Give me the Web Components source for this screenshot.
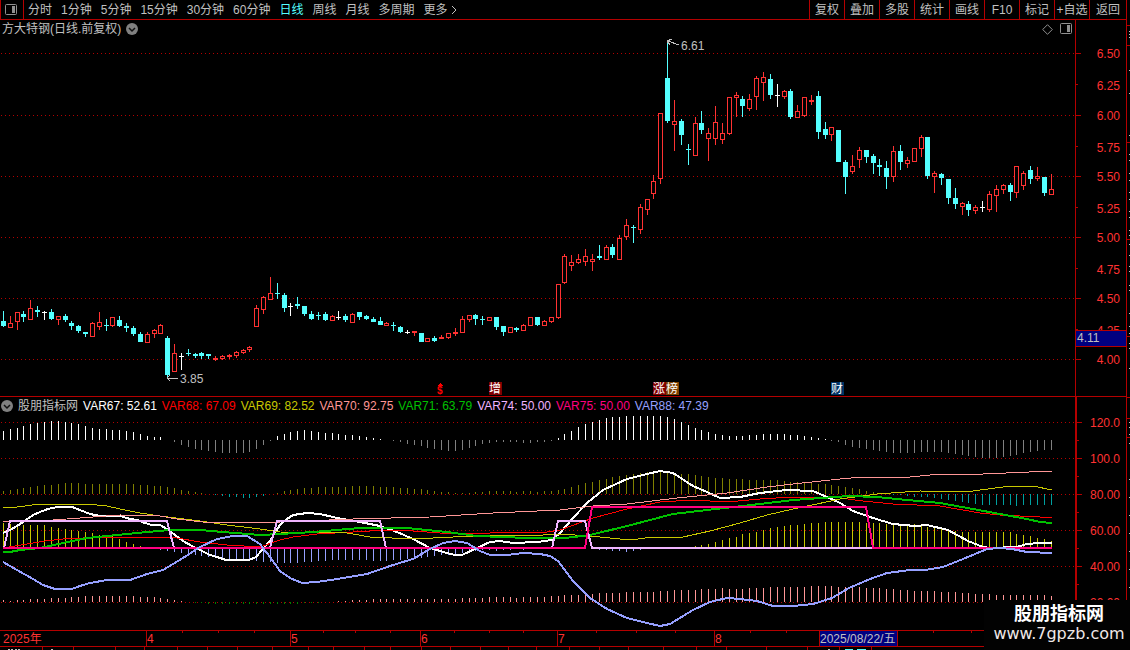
<!DOCTYPE html>
<html lang="zh-CN">
<head>
<meta charset="utf-8">
<meta name="viewport" content="width=device-width, initial-scale=1">
<title>方大特钢</title>
<style>
    :root {
        --line: #b40000;
        --label: #ff3232;
        --text: #c0c0c0;
        --active: #54ffff;
        --select: #000080;
    }

    body {
        margin: 0;
        background: #000;
        color: var(--text);
        font: 12px/18px "Liberation Sans", "Noto Sans CJK SC", sans-serif;
    }
</style>
</head>
<body>
<stock-terminal>
    <tool-bar slot="toolbar"></tool-bar>

    <chart-pane slot="charts">
        <pane-title slot="header" tools>方大特钢(日线.前复权)</pane-title>
        <price-chart slot="plot"></price-chart>
        <value-axis slot="axis" kind="price"></value-axis>
    </chart-pane>

    <chart-pane slot="charts" divided>
        <pane-title slot="header" icon-first>股朋指标网
            <legend-item slot="legend" name="VAR67" value="52.61" color="#ffffff"></legend-item>
            <legend-item slot="legend" name="VAR68" value="67.09" color="#ff0000"></legend-item>
            <legend-item slot="legend" name="VAR69" value="82.52" color="#c8c800"></legend-item>
            <legend-item slot="legend" name="VAR70" value="92.75" color="#ff9696"></legend-item>
            <legend-item slot="legend" name="VAR71" value="63.79" color="#00c000"></legend-item>
            <legend-item slot="legend" name="VAR74" value="50.00" color="#f0b4ff"></legend-item>
            <legend-item slot="legend" name="VAR75" value="50.00" color="#ff0080"></legend-item>
            <legend-item slot="legend" name="VAR88" value="47.39" color="#96a0ff"></legend-item>
        </pane-title>
        <indicator-chart slot="plot"></indicator-chart>
        <value-axis slot="axis" kind="indicator"></value-axis>
    </chart-pane>

    <time-axis slot="charts"></time-axis>
    <site-mark slot="mark">
        <span slot="name">股朋指标网</span>
        <span slot="address">www.7gpzb.com</span>
    </site-mark>
</stock-terminal>

<script>
// Screen rows at which the drawing areas begin
const PRICE_TOP = 38;
const INDICATOR_TOP = 415;

const RED = '#ff3232';
const CYAN = '#54ffff';

// Column of the n-th trading day
function dayX(n) {
    return Math.floor(3.38 + 6.848 * n);
}

function rect(x, y, w, h, fill) {
    return `<rect x="${x}" y="${y}" width="${w}" height="${h}" fill="${fill}"/>`;
}

function gridLines(rows) {
    return rows.map(y => `
        <line x1="1" x2="100%" y1="${y}" y2="${y}" transform="translate(0 .5)"
            stroke="#b40000" stroke-dasharray="1 3"/>`).join('');
}

// high, body top, body bottom, low, kind (r = up, c = down, w = flat)
const CANDLES = `
311 321 326 327 c|316 323 328 328 r|312 312 322 330 r|311 314 317 322 c|300 308 320 320 r|306 310 312 317 c
311 312 313 320 w|309 312 319 320 c|316 316 320 325 r|314 316 320 322 c|321 323 326 330 c|325 326 331 333 c
332 332 334 337 c|322 323 337 337 r|312 322 327 330 r|319 325 326 331 c|317 317 326 327 r|316 320 326 327 c
323 326 328 332 c|326 328 334 336 c|332 334 342 342 c|332 334 343 343 r|329 330 334 338 r|324 325 334 334 r
336 338 375 378 c|344 353 372 372 r|353 356 357 370 w|349 353 354 356 c|353 354 356 358 c|352 353 356 359 c
354 354 356 359 c|356 358 360 361 r|355 356 359 360 r|354 355 357 359 r|351 352 356 358 r|349 350 353 354 r
346 347 350 352 r|305 308 327 327 r|296 297 310 314 r|277 293 300 300 r|283 293 294 299 c|293 295 308 312 c
303 306 307 316 w|297 304 306 309 c|306 306 314 316 c|311 314 319 320 c|312 315 316 320 c|312 314 320 321 c
315 316 321 321 r|311 317 318 320 w|314 316 320 322 c|313 314 323 323 r|312 312 317 320 c|315 316 319 320 c
317 319 322 322 c|317 321 325 325 c|322 323 326 326 r|322 325 326 331 c|326 327 332 333 c|330 332 333 334 w
331 331 333 336 r|333 333 342 342 c|338 338 342 342 r|336 338 341 342 c|335 337 339 339 r|333 333 338 339 r
328 332 334 336 r|316 319 333 333 r|315 315 320 322 r|314 315 319 325 c|316 319 320 325 c|317 317 321 321 r
317 317 327 330 c|326 326 332 336 c|327 327 333 333 r|327 328 330 332 c|324 325 331 331 r|317 317 326 326 r
317 317 325 326 c|320 321 326 326 r|317 317 322 323 r|284 284 318 319 r|254 256 283 284 r|255 262 266 271 r
254 259 263 264 r|249 256 262 266 r|254 259 262 271 r|245 256 258 260 c|245 247 260 260 r|244 247 255 258 c
235 238 260 260 r|219 225 237 240 r|225 227 228 243 c|204 207 230 234 r|199 199 210 215 r|175 181 194 199 r
113 113 179 184 r|40 78 121 123 c|100 121 125 151 r|119 121 135 145 c|144 149 150 165 c|117 123 156 156 r
111 123 130 134 c|128 133 139 161 r|106 122 139 145 r|123 133 140 144 r|97 97 134 135 r|92 95 98 117 r
96 99 106 117 c|94 99 109 111 r|76 78 97 110 r|72 77 83 101 r|74 79 95 99 c|84 95 96 107 w
90 91 97 99 r|89 91 117 119 c|105 111 118 118 r|97 97 116 117 r|95 100 102 105 r|91 96 132 139 c
122 129 135 139 c|127 127 135 141 r|130 130 162 162 c|160 162 177 194 c|155 166 172 174 r|147 150 160 168 r
150 150 157 163 c|154 156 163 174 c|159 165 167 176 c|161 168 177 189 c|146 151 177 182 r|145 151 162 170 c
157 160 164 168 r|148 148 162 162 r|135 137 149 157 r|137 137 176 179 c|171 173 177 193 r|173 174 178 185 c
179 179 198 204 c|188 198 204 209 c|202 203 207 215 r|201 204 210 216 c|205 207 211 214 r|201 207 208 212 w
191 194 210 212 r|185 189 196 212 r|184 185 190 194 r|183 185 192 201 c|166 166 193 198 r|171 173 186 190 r
166 170 179 184 c|167 176 179 181 r|177 177 193 196 c|174 189 195 195 r`.trim().split(/[|\n]/);

// Bars of the indicator pane: base row, colours above and below it, heights
const HISTOGRAMS = [
    {
        base: 440, up: '#ffffff', down: '#808080',
        values: [9,11,12,14,16,17,18,19,19,18,17,16,14,12,11,11,10,10,9,8,6,4,3,3,0,-2,-5,-7,-9,-10,-11,-12,-13,-13,-13,-13,-12,-9,-5,-1,
            4,6,8,9,10,9,8,7,7,6,5,5,4,3,2,1,0,-1,-2,-4,-5,-6,-8,-9,-10,-11,-11,-10,-8,-6,-4,-3,-2,-2,-2,-2,-3,-3,-2,-2,-1,
            2,6,9,13,16,18,20,22,23,23,24,24,24,24,24,24,23,21,18,15,12,10,8,6,5,4,4,4,5,5,6,6,6,6,5,5,4,3,2,1,-1,-2,
            -5,-7,-8,-9,-10,-11,-12,-13,-13,-13,-13,-12,-12,-12,-12,-13,-14,-15,-16,-17,-18,-18,-18,-17,-16,-15,-13,-12,-11,-10,-10]
    },
    {
        base: 494, up: '#808000', down: '#00a0a0',
        values: [3,4,5,6,7,8,9,9,10,11,11,11,10,10,10,10,10,10,10,10,9,9,8,8,7,6,4,3,2,1,0,-1,-2,-3,-3,-4,-4,-3,-2,0,1,3,
            4,5,6,6,7,7,7,7,7,8,8,8,8,7,7,7,6,6,5,5,4,3,2,2,1,1,1,2,2,3,3,3,3,2,3,3,2,3,3,4,5,
            7,9,11,12,14,15,17,18,19,20,21,22,23,24,22,21,20,20,19,18,17,16,16,15,15,15,14,14,14,14,14,13,12,12,12,11,10,10,9,8,7,
            6,5,3,2,1,0,-1,-1,-2,-3,-3,-3,-4,-5,-6,-7,-8,-9,-10,-11,-11,-11,-11,-11,-12,-11,-11,-11,-11,-11]
    },
    {
        base: 547, gap: 2, up: '#c8c800', down: '#96a0ff',
        values: [24,23,22,22,22,22,22,20,19,18,17,16,15,14,12,12,11,8,5,3,1,0,0,-1,-2,-3,-4,-5,-6,-7,-8,-9,-10,-11,-11,-11,-11,-12,-13,-13,
            -14,-14,-14,-14,-13,-13,-12,-12,-11,-11,-11,-11,-11,-11,-12,-12,-12,-11,-11,-10,-10,-9,-8,-7,-6,-6,-5,-4,-3,-2,-1,-1,-2,-1,-1,0,-1,
            0,0,0,0,0,0,0,0,0,0,-1,-1,-2,-2,-3,-2,-1,0,0,0,0,0,0,0,1,2,3,5,7,9,10,13,14,15,17,19,20,21,22,22,23,24,24,
            25,25,25,25,25,25,24,24,24,23,23,23,23,23,22,20,19,19,18,16,15,15,15,15,15,15,15,15,13,12,11,9,8,6]
    },
    {
        base: 602, up: '#ff9696', down: '#008000',
        values: [2,1,2,2,3,3,3,4,4,4,5,5,6,6,6,6,6,6,6,6,5,5,5,4,3,2,1,0,-1,-1,-2,-2,-2,-2,-2,-2,-2,-2,-2,-2,-2,-2,-2,-2,-1,-1,-1,0,0,
            1,1,2,2,2,3,3,3,3,3,3,3,3,3,3,3,3,3,4,4,4,4,5,5,5,5,4,5,5,5,5,6,6,7,
            7,7,8,8,9,9,9,9,10,10,10,10,10,11,11,12,12,12,12,13,13,13,14,13,13,13,14,14,14,15,15,15,15,15,15,16,16,16,16,15,15,15,
            15,14,14,14,13,13,12,12,11,11,11,11,10,10,10,9,9,8,8,8,7,7,7,7,7,7,7,7,6]
    }
];

const CURVES = [
    // VAR67
    { color: '#ffffff', width: 2, points: `3,533 10,530 17,526 26,520 33,515 40,512 48,509 57,507 72,507 80,510 90,514 100,516 120,516 130,519 137,520
        145,523 152,525 160,525 167,529 175,535 183,541 192,546 200,550 210,555 217,557 226,560 249,560 256,557 262,550 270,541 276,531
        280,525 287,519 293,515 307,513 320,514 337,518 360,522 380,526 397,532 413,539 430,548 447,553 455,555 462,555 477,548 490,542
        500,541 513,543 537,542 552,540 560,533 573,518 587,503 603,490 627,479 647,474 660,471 673,473 693,486 707,492 720,498 740,497
        760,493 787,490 813,491 827,497 840,503 853,511 873,518 893,524 915,526 927,525 948,530 968,541 983,547 990,548 1017,547
        1027,544 1040,543 1052,543` },
    // VAR68
    { color: '#ff0000', width: 1, points: `3,548 27,544 45,541 63,539 83,538 110,537 167,537 177,538 200,542 227,545 260,547 280,540 293,537 317,534
        353,532 387,530 413,531 440,533 467,534 513,532 547,532 560,530 593,518 627,509 660,502 693,500 727,502 760,499 793,497 827,497
        840,498 863,501 893,504 940,506 980,513 1000,515 1040,517 1052,517` },
    // VAR69
    { color: '#c8c800', width: 1, points: `3,507 17,507 40,504 87,504 107,506 120,509 140,513 160,516 200,521 227,525 260,529 280,532 347,533 370,537
        413,539 453,537 497,535 527,536 560,534 590,536 630,540 653,537 683,537 710,531 740,523 767,515 793,509 817,504 840,499 877,494
        920,491 957,492 973,491 1003,487 1033,486 1052,490` },
    // VAR70
    { color: '#ff9696', width: 1, points: `3,522 40,521 80,518 120,515 160,516 177,519 203,522 280,522 353,519 430,517 493,513 560,510 593,506
        627,504 677,498 727,493 767,487 793,484 840,479 863,477 910,477 940,474 983,474 1052,471` },
    // VAR71
    { color: '#00c000', width: 2, points: `3,552 10,552 20,550 40,548 63,543 87,538 117,535 147,532 170,530 200,530 223,532 260,535 280,534 313,532
        360,528 407,528 447,532 477,536 527,538 565,538 590,535 627,526 673,514 707,510 760,504 793,500 849,496 877,497 907,500 940,503
        973,509 1000,514 1027,519 1040,522 1052,523` },
    // VAR74
    { color: '#f0b4ff', width: 2, points: '4,548 10,521 167,521 174,548 270,548 277,521 380,521 386,548 552,548 558,521 585,521 592,548 1052,548' },
    // VAR75
    { color: '#ff0080', width: 2, points: '3,548 585,548 592,507 866,507 873,548 1052,548' },
    // VAR88
    { color: '#96a0ff', width: 2, points: `3,562 17,570 33,579 43,585 55,589 72,589 80,586 90,583 107,580 130,580 147,574 163,570 183,558 200,547
        217,539 233,536 247,536 260,544 270,557 280,571 290,578 302,583 317,582 337,579 367,574 393,565 413,559 430,549 443,543 455,541
        467,543 480,551 490,555 507,555 523,553 540,554 550,556 558,561 573,581 590,598 607,609 627,618 647,623 660,626 670,624 693,610
        710,602 727,598 740,599 757,601 773,606 793,606 813,604 832,598 849,588 870,579 887,573 910,570 925,570 943,567 963,559 987,549
        1000,548 1012,549 1027,552 1052,553` }
];

const ICONS = {
    panel: `<svg width="12" height="12" viewBox="0 0 12 12" fill="none" stroke="#909090">
        <rect x=".5" y=".5" width="11" height="10" rx="1"/><path d="M7 2h3v7H7z" fill="#909090" stroke="none"/></svg>`,
    diamond: `<svg width="11" height="11" viewBox="0 0 11 11" fill="none" stroke="#909090"><path d="M5.5 .7l4.8 4.8-4.8 4.8L.7 5.5z"/></svg>`,
    fold: `<svg width="12" height="12" viewBox="0 0 12 12" fill="none"><circle cx="6" cy="6" r="6" fill="#808080"/>
        <path d="M3 5l3 3 3-3" stroke="#101010" stroke-width="1.5"/></svg>`,
    more: `<svg width="6" height="10" viewBox="0 0 6 10" fill="none" stroke="currentColor"><path d="M1 1l4 4-4 4"/></svg>`
};

const BUTTON_CSS = `
    button {
        margin: 0;
        padding: 0;
        border: 0;
        background: none;
        color: inherit;
        font: inherit;
        white-space: nowrap;
        cursor: pointer;
    }

    button svg {
        display: block;
    }
`;

class StockTerminal extends HTMLElement {
    connectedCallback() {
        this.attachShadow({ mode: 'open' });
        this.shadowRoot.innerHTML = `
            <style>
                :host {
                    display: flex;
                    position: relative;
                    overflow: hidden;
                }

                main {
                    flex: 1;
                    min-width: 0;
                    border-right: 1px solid var(--line);
                }

                .next {
                    flex: none;
                    display: block;
                }
            </style>
            <main>
                <slot name="toolbar"></slot>
                <slot name="charts"></slot>
            </main>
            <svg class="next" width="3" height="650" aria-hidden="true">
                ${[25, 45, 142, 239, 336, 397, 418, 437].map(y => rect(0, y, 3, 1, '#b40000')).join('')}
                ${[31, 34, 37, 70, 93, 135, 154, 160, 173, 180, 192, 199, 211, 217, 230, 235, 244, 255, 266, 271, 285, 290, 313, 326, 333,
                    343, 348, 368, 422, 427, 434, 443, 479, 497, 515, 533, 551, 569, 587].map(y => rect(2, y, 1, 1, '#c0c0c0')).join('')}
            </svg>
            <slot name="mark"></slot>
        `;
    }
}

class ToolBar extends HTMLElement {
    connectedCallback() {
        const periods = ['分时', '1分钟', '5分钟', '15分钟', '30分钟', '60分钟', '日线', '周线', '月线', '多周期'];
        const tools = ['复权', '叠加', '多股', '统计', '画线', 'F10', '标记', '+自选', '返回'];

        this.attachShadow({ mode: 'open' });
        this.shadowRoot.innerHTML = `
            <style>
                ${BUTTON_CSS}

                :host {
                    display: flex;
                    justify-content: space-between;
                    box-sizing: border-box;
                    height: 20px;
                    border-bottom: 1px solid var(--line);
                    line-height: 20px;
                }

                .periods, .tools {
                    display: flex;
                }

                .periods {
                    gap: 9px;
                }

                .layout {
                    width: 24px;
                    margin-right: -5px;
                    padding-left: 4px;
                    border: solid var(--line);
                    border-width: 0 1px;
                }

                .more {
                    display: flex;
                    align-items: center;
                    gap: 3px;
                }

                .tools button {
                    box-sizing: border-box;
                    width: 35px;
                    border-left: 1px solid var(--line);
                }

                .tools button:last-child {
                    width: 37px;
                }

                [aria-pressed="true"] {
                    color: var(--active);
                }
            </style>
            <div class="periods">
                <button class="layout" aria-label="布局">${ICONS.panel}</button>
                ${periods.map(name => `<button aria-pressed="${name === '日线'}">${name}</button>`).join('')}
                <button class="more">更多${ICONS.more}</button>
            </div>
            <div class="tools">
                ${tools.map(name => `<button>${name}</button>`).join('')}
            </div>
        `;

        this.shadowRoot.querySelectorAll('[aria-pressed]').forEach((button, i, all) => {
            button.addEventListener('click', () => {
                all.forEach(other => other.setAttribute('aria-pressed', other === button));
            });
        });
    }
}

class ChartPane extends HTMLElement {
    connectedCallback() {
        this.attachShadow({ mode: 'open' });
        this.shadowRoot.innerHTML = `
            <style>
                :host {
                    display: grid;
                    grid-template-columns: minmax(0, 1fr) 51px;
                }

                :host([divided]) {
                    border-top: 1px solid var(--line);
                }

                .axis {
                    display: grid;
                    box-sizing: border-box;
                    border-left: 1px solid var(--line);
                }

                :host([divided]) .axis {
                    border-left-width: 2px;
                }
            </style>
            <section>
                <slot name="header"></slot>
                <slot name="plot"></slot>
            </section>
            <div class="axis"><slot name="axis"></slot></div>
        `;
    }
}

class PaneTitle extends HTMLElement {
    connectedCallback() {
        const fold = `<button aria-label="菜单">${ICONS.fold}</button>`;
        const first = this.hasAttribute('icon-first');

        this.attachShadow({ mode: 'open' });
        this.shadowRoot.innerHTML = `
            <style>
                ${BUTTON_CSS}

                :host {
                    display: flex;
                    align-items: center;
                    gap: 5px;
                    height: 18px;
                    padding: 0 3px 0 2px;
                    white-space: nowrap;
                }

                :host([icon-first]) {
                    padding-left: 1px;
                }

                h2 {
                    margin: 0;
                    font: inherit;
                }

                .tools {
                    display: flex;
                    align-items: center;
                    gap: 7px;
                    margin-left: auto;
                }
            </style>
            ${first ? fold : ''}
            <h2><slot></slot></h2>
            ${first ? '' : fold}
            <slot name="legend"></slot>
            ${this.hasAttribute('tools') ? `
                <div class="tools">
                    <button aria-label="标记">${ICONS.diamond}</button>
                    <button aria-label="侧栏">${ICONS.panel}</button>
                </div>
            ` : ''}
        `;
    }
}

class LegendItem extends HTMLElement {
    connectedCallback() {
        this.attachShadow({ mode: 'open' });
        this.shadowRoot.innerHTML = `
            <style>
                :host {
                    display: block;
                    color: ${this.getAttribute('color')};
                }
            </style>
            ${this.getAttribute('name')}: ${this.getAttribute('value')}
        `;
    }
}

const PLOT_CSS = `
    :host {
        display: block;
    }

    svg {
        display: block;
        width: 100%;
        shape-rendering: crispEdges;
        font: inherit;
    }
`;

class PriceChart extends HTMLElement {
    connectedCallback() {
        this.attachShadow({ mode: 'open' });
        this.shadowRoot.innerHTML = `
            <style>${PLOT_CSS}</style>
            <svg height="358">
                <g transform="translate(0 ${-PRICE_TOP})">
                    ${gridLines([53, 115, 176, 237, 298, 359])}
                    ${CANDLES.map((row, n) => this.candle(row, dayX(n))).join('')}
                    <path d="M167 378h11M167 378l3-3M167 378l3 3M668 41l11 4M667 41l5-2M667 41l3 4" fill="none" stroke="#c0c0c0"/>
                    <text x="180" y="383" fill="#c0c0c0">3.85</text>
                    <text x="681" y="50" fill="#c0c0c0">6.61</text>
                    <path d="M440 383l3 3h-6z" fill="#ff0000"/>
                    <text x="437" y="394" fill="#ff0000" font-size="10" font-weight="700">$</text>
                    ${this.badge(489, '增', '#800000')}
                    ${this.badge(653, '涨', '#800000')}
                    ${this.badge(666, '榜', '#804000')}
                    ${this.badge(831, '财', '#003366')}
                </g>
            </svg>
        `;
    }

    candle(row, x) {
        const [high, top, bottom, low, kind] = row.split(' ').map((v, i) => i < 4 ? Number(v) : v);
        const color = { r: RED, c: CYAN, w: '#ffffff' }[kind];
        const wick = rect(x, high, 1, low - high, color);
        const body = rect(x - 2, top, 5, bottom - top, color);
        const hollow = kind === 'r' && bottom - top > 2;

        return wick + body + (hollow ? rect(x - 1, top + 1, 3, bottom - top - 2, '#000') : '');
    }

    badge(x, text, fill) {
        return `${rect(x, 382, 13, 13, fill)}<text x="${x}" y="393" fill="#ffffff">${text}</text>`;
    }
}

class IndicatorChart extends HTMLElement {
    connectedCallback() {
        this.attachShadow({ mode: 'open' });
        this.shadowRoot.innerHTML = `
            <style>${PLOT_CSS}</style>
            <svg height="215">
                <g transform="translate(0 ${-INDICATOR_TOP})">
                    ${gridLines([422, 458, 494, 530, 566, 602])}
                    ${HISTOGRAMS.map(this.bars).join('')}
                    ${CURVES.map(c => `
                        <polyline points="${c.points}" fill="none" stroke="${c.color}" stroke-width="${c.width}"/>
                    `).join('')}
                </g>
            </svg>
        `;
    }

    bars({ base, gap = 0, up, down, values }) {
        return values.map((v, n) => v > 0
            ? rect(dayX(n), base - v, 1, v, up)
            : rect(dayX(n), base + gap, 1, -v, down)).join('');
    }
}

class ValueAxis extends HTMLElement {
    connectedCallback() {
        const price = this.getAttribute('kind') === 'price';
        const top = price ? 20 : 397;
        const right = price ? 44 : 43;
        // label text and its baseline
        const labels = price
            ? [['6.50', 58], ['6.25', 90], ['6.00', 120], ['5.75', 152], ['5.50', 181], ['5.25', 213], ['5.00', 242],
                ['4.75', 274], ['4.50', 303], ['4.25', 335], ['4.00', 364]]
            : [['120.0', 427], ['100.0', 463], ['80.00', 499], ['60.00', 535], ['40.00', 571], ['20.00', 607]];
        const major = price ? [53, 115, 176, 237, 298, 359] : [422, 458, 494, 530, 566, 602];
        const minor = price ? [84, 146, 207, 268, 329] : [440, 476, 512, 548, 584];

        this.attachShadow({ mode: 'open' });
        this.shadowRoot.innerHTML = `
            <style>
                ${PLOT_CSS}

                .current {
                    fill: var(--select);
                    stroke: var(--line);
                }
            </style>
            <svg height="${price ? 376 : 233}">
                <g transform="translate(0 ${-top})">
                    ${major.map(y => rect(0, y, 5, 1, '#b40000')).join('')}
                    ${minor.map(y => rect(0, y, 2, 1, '#b40000')).join('')}
                    ${labels.map(([text, y]) => `<text x="${right}" y="${y}" text-anchor="end" fill="${RED}">${text}</text>`).join('')}
                    ${price ? `
                        <rect class="current" x="-1" y="330" width="60" height="16" transform="translate(0 .5)"/>
                        <text x="1" y="342" fill="#c0c0c0">4.11</text>
                    ` : ''}
                </g>
            </svg>
        `;
    }
}

class TimeAxis extends HTMLElement {
    connectedCallback() {
        const months = [[146, '4'], [290, '5'], [420, '6'], [557, '7'], [714, '8']];
        const weeks = [182, 218, 254, 323, 355, 390, 454, 489, 523, 596, 636, 675, 750, 786, 933, 971];
        const below = [42, 73, 115, 144, 177, 207, 237, 272, 308, 333, 364, 390, 421, 450, 480, 508, 536, 569, 599, 628, 663, 696, 726, 766, 807, 839, 871];

        this.attachShadow({ mode: 'open' });
        this.shadowRoot.innerHTML = `
            <style>
                ${PLOT_CSS}

                .scale {
                    border: solid var(--line);
                    border-width: 1px 0;
                }
            </style>
            <div class="scale">
                <svg height="15">
                    <text x="3" y="12" fill="${RED}">2025年</text>
                    ${months.map(([x, name]) => `${rect(x, 0, 1, 15, '#b40000')}<text x="${x + 1}" y="12" fill="${RED}">${name}</text>`).join('')}
                    ${weeks.map(x => rect(x, 0, 1, 2, '#b40000')).join('')}
                    ${rect(819, 0, 79, 15, '#b40000')}
                    ${rect(820, 0, 77, 15, '#000080')}
                    <text x="820" y="12" fill="#c0c0c0">2025/08/22/五</text>
                </svg>
            </div>
            <svg height="3" aria-hidden="true">
                ${below.map(x => rect(x, 0, 1, 3, '#b40000')).join('')}
                ${[8, 11, 15, 18, 51, 828].map(x => rect(x, 2, 2, 1, '#c0c0c0')).join('')}
                ${rect(845, 2, 8, 1, CYAN)}
                ${rect(857, 2, 9, 1, CYAN)}
            </svg>
        `;
    }
}

class SiteMark extends HTMLElement {
    connectedCallback() {
        this.attachShadow({ mode: 'open' });
        this.shadowRoot.innerHTML = `
            <style>
                :host {
                    position: absolute;
                    right: 0;
                    bottom: 0;
                    display: flex;
                    flex-direction: column;
                    align-items: center;
                    box-sizing: border-box;
                    width: 146px;
                    height: 50px;
                    padding: 4px 0 0 4px;
                    background: #020202;
                    color: #fff;
                    line-height: 20px;
                }

                .name {
                    font-size: 18px;
                    font-weight: 700;
                }

                .address {
                    font-family: "DejaVu Sans", sans-serif;
                    font-size: 16px;
                    color: #f0e8e8;
                    -webkit-text-stroke: 0;
                }
            </style>
            <slot class="name" name="name"></slot>
            <slot class="address" name="address"></slot>
        `;
    }
}

customElements.define('stock-terminal', StockTerminal);
customElements.define('tool-bar', ToolBar);
customElements.define('chart-pane', ChartPane);
customElements.define('pane-title', PaneTitle);
customElements.define('legend-item', LegendItem);
customElements.define('price-chart', PriceChart);
customElements.define('indicator-chart', IndicatorChart);
customElements.define('value-axis', ValueAxis);
customElements.define('time-axis', TimeAxis);
customElements.define('site-mark', SiteMark);
</script>
</body>
</html>
